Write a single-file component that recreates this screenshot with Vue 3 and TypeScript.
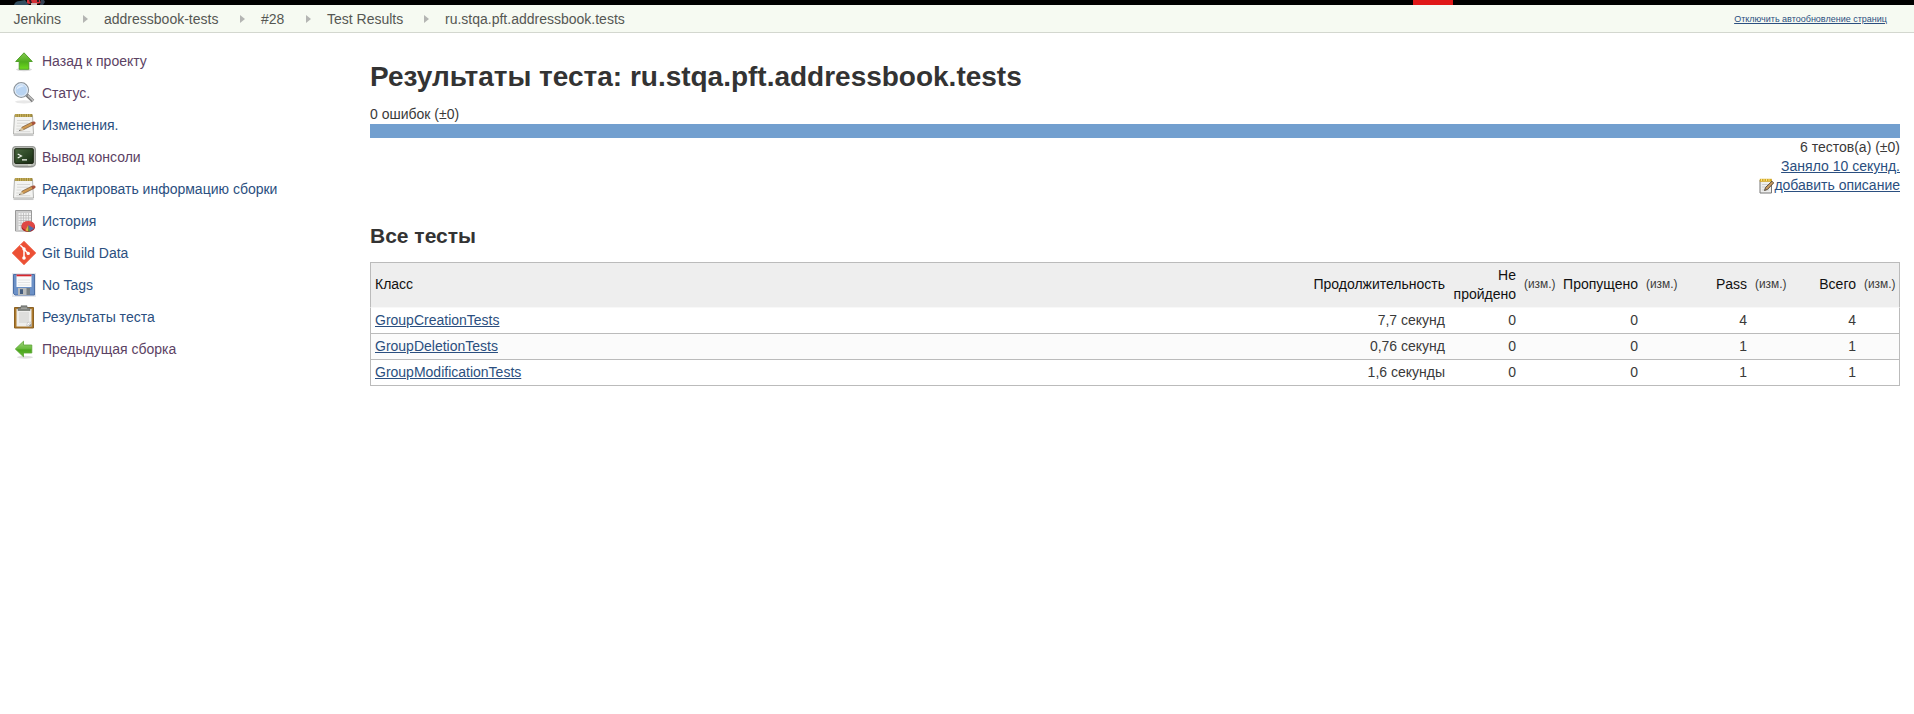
<script setup lang="ts">
interface Task { icon: string; label: string; visited?: boolean }
interface Row { name: string; duration: string; fail: number; skip: number; pass: number; total: number }

const crumbs: string[] = ['Jenkins', 'addressbook-tests', '#28', 'Test Results', 'ru.stqa.pft.addressbook.tests']

const tasks: Task[] = [
  { icon: 'up', label: 'Назад к проекту', visited: true },
  { icon: 'search', label: 'Статус.', visited: true },
  { icon: 'note', label: 'Изменения.' },
  { icon: 'terminal', label: 'Вывод консоли', visited: true },
  { icon: 'note', label: 'Редактировать информацию сборки' },
  { icon: 'graph', label: 'История' },
  { icon: 'git', label: 'Git Build Data' },
  { icon: 'save', label: 'No Tags' },
  { icon: 'clipboard', label: 'Результаты теста' },
  { icon: 'left', label: 'Предыдущая сборка', visited: true },
]

const rows: Row[] = [
  { name: 'GroupCreationTests', duration: '7,7 секунд', fail: 0, skip: 0, pass: 4, total: 4 },
  { name: 'GroupDeletionTests', duration: '0,76 секунд', fail: 0, skip: 0, pass: 1, total: 1 },
  { name: 'GroupModificationTests', duration: '1,6 секунды', fail: 0, skip: 0, pass: 1, total: 1 },
]
</script>

<template>
  <div class="page">
    <header class="top">
      <svg class="mascot" width="34" height="5" viewBox="0 0 34 5">
        <path d="M1 5Q2 1 7 1L12 0 16 5Z" fill="#334e60" />
        <path d="M14 0h13l1 3-5 1-4-1-3 1-2-1Z" fill="#d32f36" />
        <path d="M16 0h2l1 3h-2ZM24 0h2v2h-2Z" fill="#2b1d25" />
        <path d="M18 3h6v2h-6Z" fill="#c5b5b2" />
        <path d="M28 0h3l1 2-2 3h-3Z" fill="#334052" />
      </svg>
      <span class="alert"></span>
    </header>

    <nav class="crumbs">
      <template v-for="(c, i) in crumbs" :key="c">
        <a class="crumb" :class="'crumb' + i">{{ c }}</a>
        <svg v-if="i < crumbs.length - 1" class="sep" width="5" height="8" viewBox="0 0 5 8"><path d="M0 0 5 4 0 8Z" fill="#b4b5b3" /></svg>
      </template>
      <a class="refresh">Отключить автообновление страниц</a>
    </nav>

    <div class="body">
      <aside class="side">
        <a v-for="t in tasks" :key="t.label" class="task" :class="{ visited: t.visited }">
          <svg class="icon" width="24" height="24" viewBox="0 0 24 24">
            <defs>
              <linearGradient id="green" x1="0" y1="0" x2="0" y2="1"><stop offset="0" stop-color="#85c850" /><stop offset=".55" stop-color="#4fae1c" /><stop offset="1" stop-color="#6fdc1e" /></linearGradient>
              <linearGradient id="leaf" x1="0" y1="0" x2="0" y2="1"><stop offset="0" stop-color="#a2d580" /><stop offset=".5" stop-color="#68b93a" /><stop offset=".55" stop-color="#4aa51c" /><stop offset="1" stop-color="#65bd35" /></linearGradient>
              <linearGradient id="screen" x1="0" y1="0" x2="1" y2="1"><stop offset="0" stop-color="#4a6640" /><stop offset=".5" stop-color="#2f4a28" /><stop offset="1" stop-color="#182b14" /></linearGradient>
            </defs>
            <g v-if="t.icon === 'up'">
              <ellipse cx="12" cy="20.6" rx="8" ry="1.6" fill="#d9d9d9" />
              <path d="M12 3.8 20.3 12.5H16.8V20.3H7.2V12.5H3.7Z" fill="url(#green)" stroke="#4a9b22" stroke-width=".9" stroke-linejoin="round" />
            </g>
            <g v-else-if="t.icon === 'search'">
              <ellipse cx="12" cy="20.8" rx="9" ry="1.6" fill="#e8e8e8" />
              <path d="m14.5 13.8 6.5 6.2" stroke="#777" stroke-width="3.6" />
              <path d="m15.8 14.4 5.7 5.4" stroke="#bdbdbd" stroke-width="1.8" />
              <circle cx="9.2" cy="9" r="7.3" fill="#b9d4f2" stroke="#8f969d" stroke-width="1.3" />
              <circle cx="9.2" cy="9" r="6.2" fill="none" stroke="#e9f0f7" stroke-width="1" />
              <path d="M4.5 9a4.8 4.8 0 0 1 7.8-3.7Q6 7 4.5 9" fill="#e0edfb" />
            </g>
            <g v-else-if="t.icon === 'note'">
              <path d="M1.5 22.3h20" stroke="#c9c9c9" stroke-width="1.5" />
              <path d="M2.5 2.5h18l1 18.5h-20Z" fill="#f3f3f1" stroke="#a9aaa7" stroke-width=".9" />
              <path d="M2.8 1h17.6v3H2.8Z" fill="#a08a3e" />
              <path d="M4 1v3M6.3 1v3M8.6 1v3M10.9 1v3M13.2 1v3M15.5 1v3M17.8 1v3" stroke="#dac56c" stroke-width=".8" />
              <path d="M5 7.5h13M5 10.2h11M4.5 13h5M4.3 16h4M4.3 18.7h14" stroke="#d0d0ce" stroke-width=".8" />
              <path d="m8.5 17.2 1.5-3 10.3-5.2 1.4 2.5-10 5.1Z" fill="#d09a50" stroke="#806040" stroke-width=".8" />
              <path d="m19.3 9.6 1.9-1q1.8-.5 2.3 1t-1.2 2l-1.6.9Z" fill="#a8553d" />
              <path d="m7.5 17.5 2.3-3.1 1.8 2.5Z" fill="#d8c7a2" /><path d="m7 18 1.5-.2-.7-1.1Z" fill="#222" />
            </g>
            <g v-else-if="t.icon === 'terminal'">
              <ellipse cx="12" cy="21.8" rx="10" ry="1.3" fill="#bbb" />
              <rect x=".7" y="1.7" width="22.6" height="19.6" rx="2.2" fill="#bfc2bc" stroke="#858883" />
              <rect x="2.7" y="3.7" width="18.6" height="14.7" rx=".8" fill="url(#screen)" stroke="#18220f" />
              <path d="m5.7 9 3.7 2-3.7 2M10 14.9h5" fill="none" stroke="#f2f6ef" stroke-width="1.2" />
              <path d="M16 20h3" stroke="#e8f0dc" stroke-width=".8" />
            </g>
            <g v-else-if="t.icon === 'graph'">
              <path d="M3.5 1.5h16V22h-16Z" fill="#f1f1f1" stroke="#999" />
              <path d="M4 2h15v2H4ZM4 4h2.5v17.5H4Z" fill="#cdcdcd" />
              <path d="M6.5 6.5H19M6.5 9H19M6.5 11.5H19M6.5 14H19M6.5 16.5H19M9 4v17M11.5 4v17M14 4v17M16.5 4v17" stroke="#b5b5b5" stroke-width=".7" />
              <ellipse cx="16.2" cy="18" rx="6.8" ry="5" fill="#a51e20" />
              <ellipse cx="16.2" cy="16.6" rx="6.6" ry="4.7" fill="#df4744" />
              <path d="m16.3 16-3 5.4 3 1Z" fill="#d8b540" /><path d="m16.3 16 0 6.8 2-.3Z" fill="#4b974a" /><path d="m16.3 16 1.8 6.3 4-2.7Z" fill="#526cae" />
            </g>
            <g v-else-if="t.icon === 'git'">
              <path d="M12 .7 23.3 12 12 23.3.7 12Z" fill="#ec5035" stroke="#ec5035" stroke-width="1.2" stroke-linejoin="round" />
              <path d="m8.3 4.2 3.7 3.6v9.4M12 8.2l4.3 4.3" stroke="#fff" stroke-width="1.5" fill="none" />
              <circle cx="12" cy="8" r="1.7" fill="#fff" /><circle cx="12" cy="17" r="1.8" fill="#fff" /><circle cx="16.2" cy="12.4" r="1.7" fill="#fff" />
            </g>
            <g v-else-if="t.icon === 'save'">
              <path d="M0 0h24v24H0Z" fill="#e5e7ec" />
              <path d="M1.5 1.5h21v20.5H3L1.5 20.5Z" fill="#6c91c7" stroke="#4c6fa5" />
              <path d="M4.5 1.5h15V14h-15Z" fill="#fafafa" /><path d="M4.5 1.5h15v1.8h-15Z" fill="#d8272c" />
              <path d="M6 7h12M6 9.5h12M6 12h12" stroke="#d7d7d7" stroke-width=".6" />
              <path d="M6 15h12v7H6Z" fill="#b9bbbb" /><path d="M8 16.2h3v4.8H8Z" fill="#435c7f" /><path d="M14.5 15h3.5v7h-3.5Z" fill="#777f85" />
            </g>
            <g v-else-if="t.icon === 'clipboard'">
              <path d="M2.5 2.5h19V23h-19Z" fill="#ad7a2d" stroke="#8c6122" />
              <path d="M4.5 4h15v17.5h-15Z" fill="#eeeeec" /><path d="M7 7h10v11H7Z" fill="#dededc" />
              <path d="m14.5 21.5 1-4 4-.5Z" fill="#fff" stroke="#aaa" stroke-width=".5" /><path d="m16 21.5 3.5-3.3v3.3Z" fill="#989995" />
              <path d="M6 5.5V3l3-.5V.8h6v1.7l3 .5v2.5Z" fill="#80837f" stroke="#666965" stroke-width=".6" /><path d="M9 3.2h6" stroke="#aeb0ac" />
            </g>
            <g v-else>
              <ellipse cx="13" cy="20.3" rx="8" ry="1.5" fill="#e0e0e0" />
              <path d="M3.3 12 11.5 4.2V8H19.8V16H11.5V19.8Z" fill="url(#leaf)" stroke="#5aa332" stroke-width=".8" stroke-linejoin="round" />
            </g>
          </svg>
          <span>{{ t.label }}</span>
        </a>
      </aside>

      <main class="main">
        <h1>Результаты теста: ru.stqa.pft.addressbook.tests</h1>
        <div class="failures">0 ошибок (±0)</div>
        <div class="bar"></div>
        <div class="summary">
          <div>6 тестов(а) (±0)</div>
          <div><a class="link">Заняло 10 секунд.</a></div>
          <div class="describe">
            <svg width="15" height="16" viewBox="0 0 15 16">
              <path d="M1 2h11.5v13H1Z" fill="#eeeeed" stroke="#777" /><path d="M.8.8h12v3H.8Z" fill="#d4a823" />
              <path d="M2.5 1v2M5 1v2M7.5 1v2M10 1v2" stroke="#fff0a5" stroke-width=".8" />
              <path d="M3 6.5h6M3 9h4M3 12h7" stroke="#c5c5c5" stroke-width=".8" />
              <path d="m5.5 12.5 1-3L13 3.2l1.7 1.7-6.2 6.5Z" fill="#c79a61" stroke="#493e32" stroke-width=".9" />
            </svg><a class="link">добавить описание</a>
          </div>
        </div>

        <h2>Все тесты</h2>
        <table>
          <colgroup>
            <col class="c-name"><col class="c-dur"><col class="c-fail"><col class="c-diff"><col class="c-skip"><col class="c-diff"><col class="c-num"><col class="c-diff"><col class="c-num"><col class="c-last">
          </colgroup>
          <thead>
            <tr>
              <th class="name">Класс</th><th>Продолжительность</th><th>Не пройдено</th><th class="diff">(изм.)</th>
              <th>Пропущено</th><th class="diff">(изм.)</th><th>Pass</th><th class="diff">(изм.)</th><th>Всего</th><th class="diff">(изм.)</th>
            </tr>
          </thead>
          <tbody>
            <tr v-for="r in rows" :key="r.name">
              <td class="name"><a class="link">{{ r.name }}</a></td><td>{{ r.duration }}</td><td>{{ r.fail }}</td><td></td>
              <td>{{ r.skip }}</td><td></td><td>{{ r.pass }}</td><td></td><td>{{ r.total }}</td><td></td>
            </tr>
          </tbody>
        </table>
      </main>
    </div>
  </div>
</template>

<style>
body { margin: 0; background: #fff; }
</style>

<style scoped>
.page { height: 714px; overflow: hidden; font: 14px/19px "Liberation Sans", Arial, sans-serif; color: #3a3a3a; }
.top { display: flex; height: 5px; background: #000; }
.mascot { margin-left: 13px; }
.alert { width: 40px; height: 5px; margin-left: 1366px; background: #e01818; }
.crumbs { display: flex; align-items: center; box-sizing: border-box; height: 28px; padding: 1px 27px 0 13.5px; border-bottom: 1px solid #d3d7cf; background: #f6faf2; }
.crumb { color: #555753; white-space: nowrap; }
.crumb0 { width: 69.5px; }
.crumb1 { width: 136px; }
.crumb2 { width: 45px; }
.crumb3 { width: 97px; }
.sep { margin-right: 16px; }
.refresh { margin-left: auto; font-size: 9px; color: #2b4f80; text-decoration: underline; }
.body { display: flex; }
.side { width: 358px; padding: 16px 0 0 12px; flex: none; }
.task { display: flex; align-items: center; height: 24px; margin-bottom: 8px; color: #2b4f80; white-space: nowrap; }
.visited { color: #5c4264; }
.icon { margin-right: 6px; }
.main { width: 1530px; padding-top: 27px; }
h1 { margin: 0; font-size: 28px; line-height: 34px; color: #333; white-space: nowrap; letter-spacing: -0.01px; }
.failures { margin-top: 11px; }
.bar { height: 14px; background: #729fcf; }
.summary { text-align: right; }
.link { color: #2b4f80; text-decoration: underline; }
.describe { display: flex; justify-content: flex-end; align-items: center; }
h2 { margin: 28px 0 0; font-size: 21px; line-height: 26px; color: #333; }
table { width: 1530px; margin-top: 13px; table-layout: fixed; border-spacing: 0; }
.c-name { width: 939px; }
.c-dur { width: 140px; }
.c-fail { width: 71px; }
.c-diff { width: 39px; }
.c-skip { width: 83px; }
.c-num { width: 70px; }
.c-last { width: 40px; }
th, td { box-sizing: border-box; padding: 0 4px; text-align: right; font-weight: normal; }
th { height: 46px; padding-bottom: 1px; border-top: 1px solid #bbb; border-bottom: 1px solid #f8f8f8; background: #eee; color: #111; }
td { height: 26px; border-bottom: 1px solid #bbb; }
tbody tr:nth-child(even) { background: #fbfbfb; }
th:first-child, td:first-child { border-left: 1px solid #bbb; }
th:last-child, td:last-child { border-right: 1px solid #bbb; }
.name { text-align: left; }
.diff { font-size: 11.9px; color: #3a3a3a; white-space: nowrap; }
</style>
